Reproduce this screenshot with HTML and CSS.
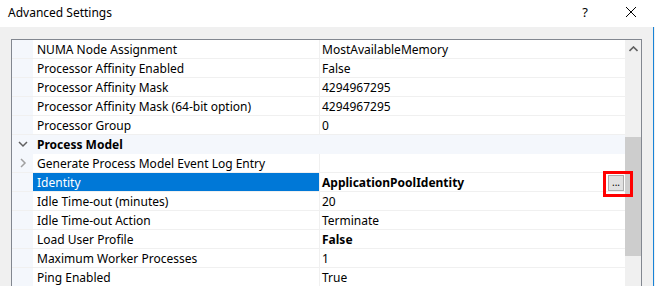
FILE: index.html
```html
<!DOCTYPE html>
<html lang="en">
<head>
    <meta charset="UTF-8">
    <title>Advanced Settings</title>
    <link rel="stylesheet" href="styles.css">
</head>
<body>
    <div class="dialog">
        <div class="titlebar">
            <span class="title">Advanced Settings</span>
            <span class="help">?</span>
            <span class="close">
                <svg width="12" height="12" viewBox="0 0 12 12"><path d="M1 1L11 11M11 1L1 11" stroke="#000" stroke-width="1"/></svg>
            </span>
        </div>

        <div class="content">
            <div class="grid">
                <div class="rows">
                    <div class="row"><div class="gutter"></div><div class="name">NUMA Node Assignment</div><div class="value">MostAvailableMemory</div></div>
                    <div class="row"><div class="gutter"></div><div class="name">Processor Affinity Enabled</div><div class="value">False</div></div>
                    <div class="row"><div class="gutter"></div><div class="name">Processor Affinity Mask</div><div class="value">4294967295</div></div>
                    <div class="row"><div class="gutter"></div><div class="name">Processor Affinity Mask (64-bit option)</div><div class="value">4294967295</div></div>
                    <div class="row"><div class="gutter"></div><div class="name">Processor Group</div><div class="value">0</div></div>
                    <div class="row category">
                        <div class="gutter">
                            <svg width="10" height="10" viewBox="0 0 10 10"><path d="M1 3L5 7L9 3" fill="none" stroke="#606060" stroke-width="1.5"/></svg>
                        </div>
                        <div class="name">Process Model</div>
                    </div>
                    <div class="row">
                        <div class="gutter">
                            <svg width="10" height="10" viewBox="0 0 10 10"><path d="M3 1L7 5L3 9" fill="none" stroke="#a0a0a0" stroke-width="1.5"/></svg>
                        </div>
                        <div class="name">Generate Process Model Event Log Entry</div><div class="value"></div>
                    </div>
                    <div class="row selected">
                        <div class="gutter"></div>
                        <div class="name">Identity</div>
                        <div class="value bold">ApplicationPoolIdentity<span class="ellipsis">...</span></div>
                    </div>
                    <div class="row"><div class="gutter"></div><div class="name">Idle Time-out (minutes)</div><div class="value">20</div></div>
                    <div class="row"><div class="gutter"></div><div class="name">Idle Time-out Action</div><div class="value">Terminate</div></div>
                    <div class="row"><div class="gutter"></div><div class="name">Load User Profile</div><div class="value bold">False</div></div>
                    <div class="row"><div class="gutter"></div><div class="name">Maximum Worker Processes</div><div class="value">1</div></div>
                    <div class="row"><div class="gutter"></div><div class="name">Ping Enabled</div><div class="value">True</div></div>
                </div>
                <div class="scrollbar">
                    <div class="arrow">
                        <svg width="9" height="6" viewBox="0 0 9 6"><path d="M0.5 5L4.5 1L8.5 5" fill="none" stroke="#606060" stroke-width="1.6"/></svg>
                    </div>
                    <div class="thumb"></div>
                </div>
                <div class="highlight"></div>
            </div>
        </div>
    </div>
</body>
</html>
```

FILE: styles.css
```css
body {
    margin: 0;
    font-family: 'Noto Sans', 'Segoe UI', Arial, sans-serif;
    font-size: 12px;
    color: #000;
    background-color: #f0f0f0;
    overflow: hidden;
}

.dialog {
    width: 655px;
    height: 286px;
    display: flex;
    flex-direction: column;
}

.titlebar {
    height: 27px;
    background-color: white;
    display: flex;
    align-items: center;
    padding-left: 8px;
    flex-shrink: 0;
}

.title {
    flex: 1;
    font-size: 12px;
    margin-top: -3px;
}

.help {
    width: 46px;
    text-align: center;
    font-size: 13px;
    margin-top: -3px;
}

.close {
    width: 46px;
    display: flex;
    justify-content: center;
    margin-top: -3px;
    margin-right: 1px;
}

.content {
    flex: 1;
    padding: 12px 0 0 11px;
    border-right: 1px solid #1883d7;
    margin-right: 1px;
    min-height: 0;
}

.grid {
    position: relative;
    width: 629px;
    height: 260px;
    border: 1px solid #828790;
    border-bottom: none;
    background-color: white;
    display: flex;
}

.rows {
    width: 613px;
}

.row {
    display: flex;
    height: 18px;
    border-bottom: 1px solid #f0f0f0;
    line-height: 18px;
}

.gutter {
    width: 21px;
    background-color: #f4f7fc;
    display: flex;
    align-items: center;
    justify-content: center;
    flex-shrink: 0;
}

.name {
    width: 282px;
    padding-left: 4px;
    border-right: 1px solid #f0f0f0;
    white-space: nowrap;
    overflow: hidden;
}

.value {
    flex: 1;
    padding-left: 2px;
    position: relative;
    white-space: nowrap;
}

.name,
.value {
    box-sizing: border-box;
    height: 18px;
    padding-top: 1px;
    line-height: 18px;
    overflow: hidden;
}

.name {
    width: 287px;
}

.bold {
    font-weight: bold;
}

.category {
    background-color: #f4f7fc;
    border-bottom-color: #f4f7fc;
}

.category .name {
    font-weight: bold;
    border-right: none;
}

.selected .name {
    background-color: #0078d7;
    color: white;
}

.ellipsis {
    position: absolute;
    right: 1px;
    top: 2px;
    width: 14px;
    height: 14px;
    border: 1px solid #adadad;
    background-color: #e1e1e1;
    font-weight: normal;
    font-size: 10px;
    line-height: 12px;
    text-align: center;
}

.scrollbar {
    width: 16px;
    background-color: #f0f0f0;
    display: flex;
    flex-direction: column;
}

.arrow {
    height: 17px;
    display: flex;
    align-items: center;
    justify-content: center;
}

.thumb {
    margin-top: 80px;
    height: 119px;
    background-color: #cdcdcd;
}

.highlight {
    position: absolute;
    left: 591px;
    top: 131px;
    width: 24px;
    height: 20px;
    border: 3px solid #ff0000;
}
```
